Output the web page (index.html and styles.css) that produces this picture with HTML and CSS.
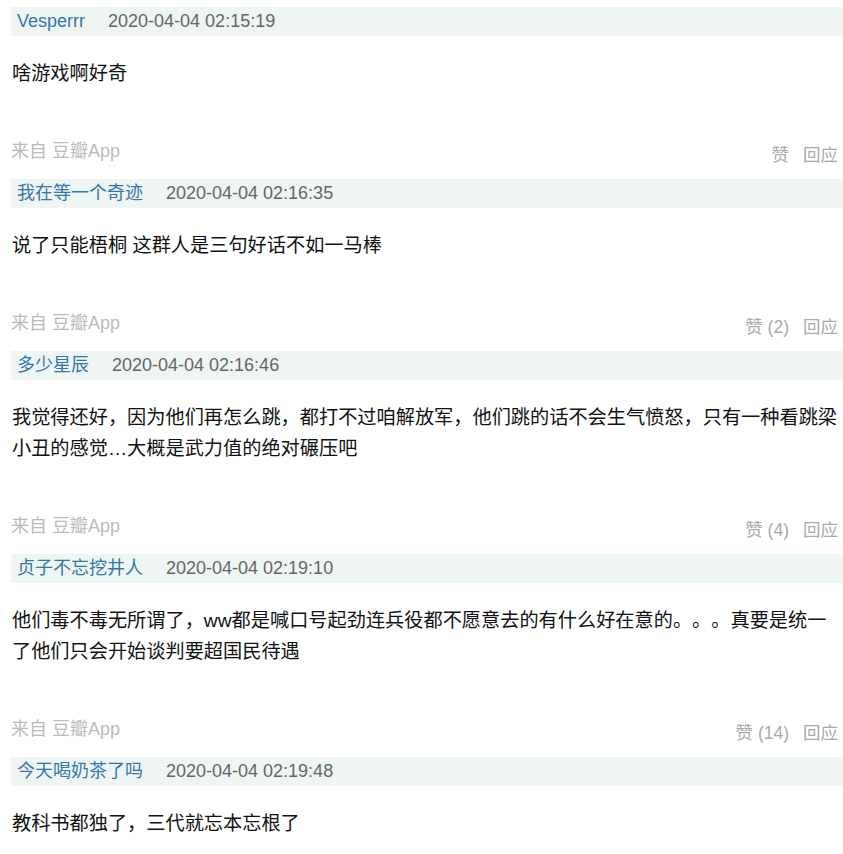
FILE: index.html
```html
<!DOCTYPE html>
<html lang="zh-CN">
<head>
<meta charset="utf-8">
<title>回应</title>
<link rel="stylesheet" href="styles.css">
</head>
<body>
<div class="list">
  <div class="comment">
    <div class="head"><a class="name">Vesperrr</a><span class="time">2020-04-04 02:15:19</span></div>
    <p class="text">啥游戏啊好奇</p>
    <div class="foot"><span class="src">来自 豆瓣App</span><span class="acts"><a class="act">赞</a><a class="act">回应</a></span></div>
  </div>
  <div class="comment">
    <div class="head"><a class="name">我在等一个奇迹</a><span class="time">2020-04-04 02:16:35</span></div>
    <p class="text">说了只能梧桐 这群人是三句好话不如一马棒</p>
    <div class="foot"><span class="src">来自 豆瓣App</span><span class="acts"><a class="act">赞 (2)</a><a class="act">回应</a></span></div>
  </div>
  <div class="comment">
    <div class="head"><a class="name">多少星辰</a><span class="time">2020-04-04 02:16:46</span></div>
    <p class="text">我觉得还好，因为他们再怎么跳，都打不过咱解放军，他们跳的话不会生气愤怒，只有一种看跳梁小丑的感觉…大概是武力值的绝对碾压吧</p>
    <div class="foot"><span class="src">来自 豆瓣App</span><span class="acts"><a class="act">赞 (4)</a><a class="act">回应</a></span></div>
  </div>
  <div class="comment">
    <div class="head"><a class="name">贞子不忘挖井人</a><span class="time">2020-04-04 02:19:10</span></div>
    <p class="text">他们毒不毒无所谓了，ww都是喊口号起劲连兵役都不愿意去的有什么好在意的。。。真要是统一了他们只会开始谈判要超国民待遇</p>
    <div class="foot"><span class="src">来自 豆瓣App</span><span class="acts"><a class="act">赞 (14)</a><a class="act">回应</a></span></div>
  </div>
  <div class="comment">
    <div class="head"><a class="name">今天喝奶茶了吗</a><span class="time">2020-04-04 02:19:48</span></div>
    <p class="text">教科书都独了，三代就忘本忘根了</p>
  </div>
</div>
</body>
</html>
```

FILE: styles.css
```css
html, body {
  margin: 0;
  padding: 0;
  background: #fff;
}

body {
  font-family: "Liberation Sans", Arial, "Noto Sans CJK SC", sans-serif;
  color: #111;
  text-spacing-trim: space-all;
}

.list {
  padding: 7px 0 0 11px;
}

.comment {
  margin-bottom: 14px;
}

.head {
  display: flex;
  align-items: flex-start;
  height: 29px;
  line-height: 29px;
  padding-left: 6px;
  background: #eff5f2;
}

.name {
  font-size: 18px;
  line-height: 28px;
  color: #3377aa;
  text-decoration: none;
}

.time {
  margin-left: 23px;
  font-size: 18px;
  line-height: 28px;
  color: #666;
}

.text {
  margin: 21.5px 0 0 1px;
  font-size: 19.2px;
  line-height: 31px;
  color: #111;
  text-spacing-trim: space-all;
}

.foot {
  display: flex;
  justify-content: space-between;
  align-items: center;
  height: 28px;
  margin-top: 48.5px;
  padding-right: 5px;
}

.src {
  font-size: 18px;
  color: #bbb;
  margin-top: -4px;
}

.acts {
  display: flex;
  margin-top: 4px;
}

.act {
  font-size: 17.5px;
  color: #aaa;
  text-decoration: none;
}

.act + .act {
  margin-left: 14px;
}
```
